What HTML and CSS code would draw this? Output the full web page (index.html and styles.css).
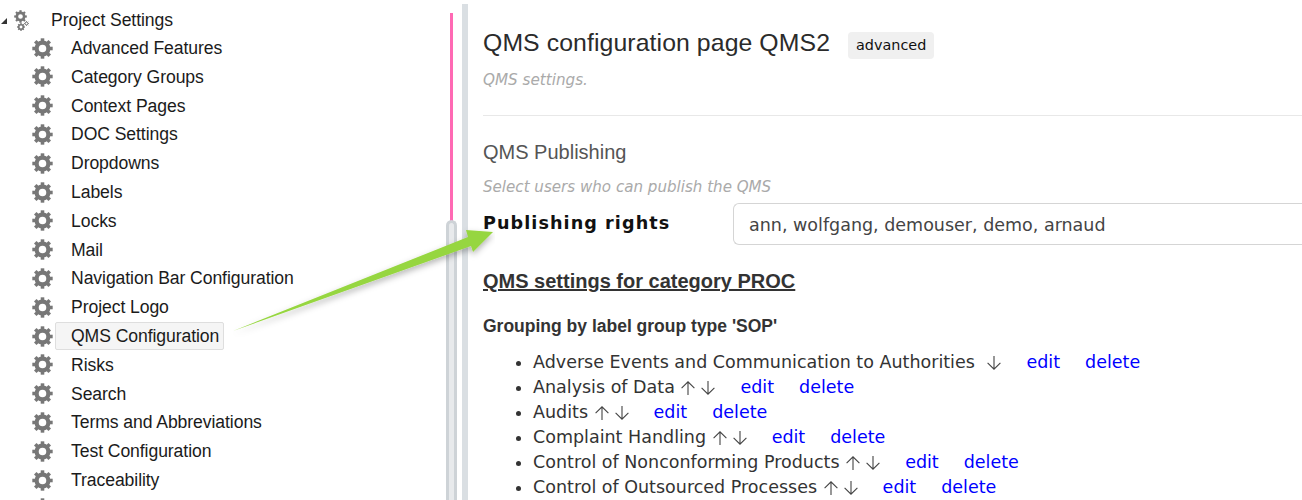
FILE: index.html
```html
<!DOCTYPE html>
<html lang="en">
<head>
<meta charset="utf-8">
<title>QMS configuration page QMS2</title>
<link rel="stylesheet" href="styles.css">
</head>
<body>
<svg class="defs" width="0" height="0" aria-hidden="true">
  <defs>
    <symbol id="gear" viewBox="0 0 20 20">
      <circle cx="10" cy="10" r="5.6" fill="none" stroke="#777" stroke-width="4"/>
      <g stroke="#777" stroke-width="3.4">
        <path d="M10 0.3V4"/><path d="M10 16V19.7"/><path d="M0.3 10H4"/><path d="M16 10H19.7"/>
        <path d="M3.1 3.1L5.8 5.8"/><path d="M14.2 14.2L16.9 16.9"/><path d="M3.1 16.9L5.8 14.2"/><path d="M14.2 5.8L16.9 3.1"/>
      </g>
    </symbol>
    <symbol id="up" viewBox="0 0 14 14">
      <path d="M7 14V0.8M0.6 7.2L7 0.8L13.4 7.2" fill="none" stroke="#444" stroke-width="1.1"/>
    </symbol>
    <symbol id="down" viewBox="0 0 14 14">
      <path d="M7 0V13.2M0.6 6.8L7 13.2L13.4 6.8" fill="none" stroke="#444" stroke-width="1.1"/>
    </symbol>
  </defs>
</svg>
<div class="page">
  <nav class="tree">
    <div class="root">
      <span class="caret"></span>
      <svg class="root-icon" width="16" height="22" viewBox="0 0 16 22">
        <use href="#gear" x="0" y="0" width="13" height="13"/>
        <use href="#gear" x="3" y="13" width="8" height="8"/>
        <use href="#gear" x="10" y="11" width="5" height="5"/>
      </svg>
      <span>Project Settings</span>
    </div>
    <ul class="nodes">
      <li class="node"><svg class="gear"><use href="#gear"/></svg><span class="label">Advanced Features</span></li>
      <li class="node"><svg class="gear"><use href="#gear"/></svg><span class="label">Category Groups</span></li>
      <li class="node"><svg class="gear"><use href="#gear"/></svg><span class="label">Context Pages</span></li>
      <li class="node"><svg class="gear"><use href="#gear"/></svg><span class="label">DOC Settings</span></li>
      <li class="node"><svg class="gear"><use href="#gear"/></svg><span class="label">Dropdowns</span></li>
      <li class="node"><svg class="gear"><use href="#gear"/></svg><span class="label">Labels</span></li>
      <li class="node"><svg class="gear"><use href="#gear"/></svg><span class="label">Locks</span></li>
      <li class="node"><svg class="gear"><use href="#gear"/></svg><span class="label">Mail</span></li>
      <li class="node"><svg class="gear"><use href="#gear"/></svg><span class="label">Navigation Bar Configuration</span></li>
      <li class="node"><svg class="gear"><use href="#gear"/></svg><span class="label">Project Logo</span></li>
      <li class="node"><svg class="gear"><use href="#gear"/></svg><span class="label selected">QMS Configuration</span></li>
      <li class="node"><svg class="gear"><use href="#gear"/></svg><span class="label">Risks</span></li>
      <li class="node"><svg class="gear"><use href="#gear"/></svg><span class="label">Search</span></li>
      <li class="node"><svg class="gear"><use href="#gear"/></svg><span class="label">Terms and Abbreviations</span></li>
      <li class="node"><svg class="gear"><use href="#gear"/></svg><span class="label">Test Configuration</span></li>
      <li class="node"><svg class="gear"><use href="#gear"/></svg><span class="label">Traceability</span></li>
      <li class="node"><svg class="gear"><use href="#gear"/></svg><span class="label"></span></li>
    </ul>
  </nav>
  <div class="scroll">
    <div class="scroll-pink"></div>
    <div class="scroll-thumb"></div>
  </div>
  <div class="divider"></div>
  <main class="content">
    <header class="title-row">
      <h1>QMS configuration page QMS2</h1>
      <span class="badge">advanced</span>
    </header>
    <p class="desc">QMS settings.</p>
    <hr class="rule">
    <h2>QMS Publishing</h2>
    <p class="hint">Select users who can publish the QMS</p>
    <div class="field">
      <label class="field-label">Publishing rights</label>
      <div class="field-input">ann, wolfgang, demouser, demo, arnaud</div>
    </div>
    <h3>QMS settings for category PROC</h3>
    <h4>Grouping by label group type 'SOP'</h4>
    <ul class="items">
      <li>Adverse Events and Communication to Authorities <span class="arrows only"><svg class="ar"><use href="#down"/></svg></span><a>edit</a><a>delete</a></li>
      <li>Analysis of Data <span class="arrows"><svg class="ar"><use href="#up"/></svg><svg class="ar"><use href="#down"/></svg></span><a>edit</a><a>delete</a></li>
      <li>Audits <span class="arrows"><svg class="ar"><use href="#up"/></svg><svg class="ar"><use href="#down"/></svg></span><a>edit</a><a>delete</a></li>
      <li>Complaint Handling <span class="arrows"><svg class="ar"><use href="#up"/></svg><svg class="ar"><use href="#down"/></svg></span><a>edit</a><a>delete</a></li>
      <li>Control of Nonconforming Products <span class="arrows"><svg class="ar"><use href="#up"/></svg><svg class="ar"><use href="#down"/></svg></span><a>edit</a><a>delete</a></li>
      <li>Control of Outsourced Processes <span class="arrows"><svg class="ar"><use href="#up"/></svg><svg class="ar"><use href="#down"/></svg></span><a>edit</a><a>delete</a></li>
    </ul>
  </main>
</div>
<svg class="callout" width="270" height="120" viewBox="225 225 270 120" aria-hidden="true">
  <defs>
    <filter id="sh" x="-10%" y="-20%" width="120%" height="150%">
      <feDropShadow dx="0" dy="3" stdDeviation="3" flood-color="#000" flood-opacity="0.3"/>
    </filter>
  </defs>
  <polygon points="233,331 468,237 466,230 493,232 473,252 471,246" fill="#96d63f" filter="url(#sh)"/>
</svg>
</body>
</html>
```
FILE: styles.css
```css
* { box-sizing: border-box; }
html, body { margin: 0; height: 500px; overflow: hidden; background: #fff; }
body { position: relative; }
.defs { position: absolute; }
.page { display: flex; height: 500px; overflow: hidden; }
.tree {
  width: 446px;
  flex: none;
  font: 17.6px/28.8px "Liberation Sans", Arial, sans-serif;
  color: #1b1b1b;
  letter-spacing: -0.08px;
  padding-top: 7px;
}
.root { display: flex; align-items: center; height: 26.7px; padding-left: 0.5px; }
.caret {
  width: 0; height: 0;
  border-left: 6px solid transparent;
  border-bottom: 6px solid #333;
  margin-top: 2px;
}
.root-icon { margin-left: 7.5px; margin-right: 21px; margin-top: 2px; }
.nodes { list-style: none; margin: 0; padding: 0 0 0 32px; }
.node { display: flex; align-items: center; height: 28.8px; }
.gear { width: 21px; height: 21px; flex: none; margin-right: 2px; }
.label { padding: 0 4px 0 15px; line-height: 26px; height: 28px; border: 1px solid transparent; margin-left: 0; }
.label.selected { background: #f5f5f5; border-color: #dedede; border-radius: 2px; }
.scroll { position: relative; width: 11px; flex: none; }
.scroll-pink { position: absolute; left: 4px; top: 13px; width: 3px; height: 210px; background: #ff69b4; }
.scroll-thumb {
  position: absolute; left: 0; top: 220px; width: 11px; height: 290px;
  border: 3px solid #ced3d7; border-bottom: 0; border-radius: 6px 6px 0 0; background: #e8eaec;
}
.divider { width: 6px; flex: none; margin: 4px 0 0 5px; background: #dadfe3; }
.content {
  flex: 1; min-width: 0;
  padding: 0 0 0 15px;
  font-family: "DejaVu Sans", Verdana, sans-serif;
  color: #333;
  overflow: hidden;
}
.title-row { display: flex; align-items: flex-start; height: 30px; margin-top: 29px; }
h1 { margin: 0; font: 400 24.8px/27px "Liberation Sans", Arial, sans-serif; color: #2b2b2b; letter-spacing: 0.09px; }
.badge {
  margin: 3px 0 0 18px; padding: 0 8px; height: 27px;
  font-size: 14.4px; line-height: 27px; color: #111; background: #f0f0f0; border-radius: 4px;
}
.desc { margin: 12px 0 0; font-size: 15.2px; line-height: 18px; font-style: italic; color: #aaa; }
.rule { margin: 26px 0 0; border: 0; border-top: 1px solid #e8e8e8; }
h2 { margin: 24px 0 0; font: 400 20px/24px "Liberation Sans", Arial, sans-serif; color: #555; }
.hint { margin: 14px 0 0; font-size: 15.1px; line-height: 18px; font-style: italic; color: #aaa; }
.field { display: flex; align-items: flex-start; margin-top: 7px; }
.field-label { width: 250px; flex: none; font-weight: 700; font-size: 17.6px; line-height: 22px; color: #111; letter-spacing: 1.07px; padding-top: 9px; }
.field-input {
  flex: 1; height: 42px; padding: 0 15px; border: 1px solid #d5d5d5; border-radius: 6px 0 0 6px; border-right: 0;
  font-size: 17.5px; line-height: 42px; color: #444; margin-right: -4px; white-space: nowrap;
}
h3 { margin: 24px 0 0; font: 700 20px/24px "Liberation Sans", Arial, sans-serif; color: #333; text-decoration: underline; }
h4 { margin: 23px 0 0; font: 700 17.5px/20px "Liberation Sans", Arial, sans-serif; color: #333; }
.items { margin: 14px 0 0; padding: 0 0 0 50px; font-size: 17.5px; line-height: 25px; color: #333; }
.items li { white-space: nowrap; }
.items a { color: #00f; margin-left: 25px; }
.ar { display: inline-block; width: 14px; height: 14px; vertical-align: -2px; margin-left: 1px; }
.ar + .ar { margin-left: 6px; }
.arrows.only .ar { margin-left: 7px; }
.callout { position: absolute; left: 225px; top: 225px; pointer-events: none; }
```
